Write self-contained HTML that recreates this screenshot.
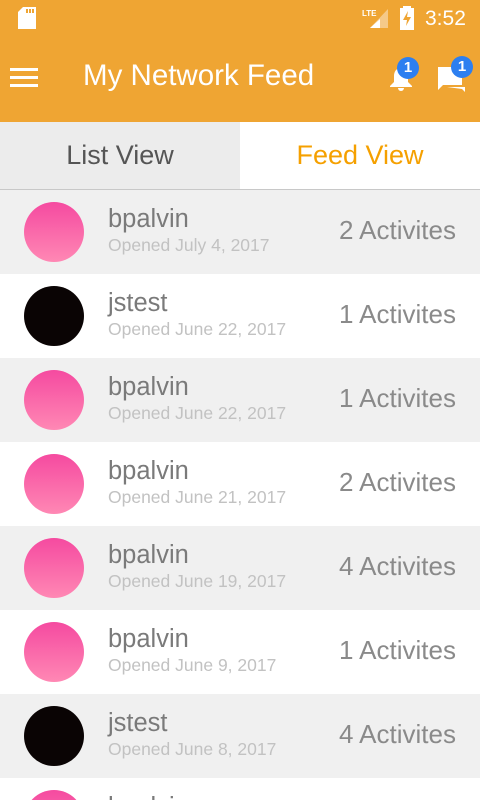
<!DOCTYPE html>
<html style="height:800px;overflow:hidden"><head><style>
*{margin:0;padding:0;box-sizing:border-box}
body{width:480px;height:800px;overflow:hidden;font-family:"Liberation Sans",sans-serif;background:#fff;position:relative}
.top{position:absolute;left:0;top:0;width:480px;height:122px;background:#EFA533}
.title{position:absolute;left:83px;top:59px;font-size:29.5px;color:#fff}
.time{position:absolute;left:425px;top:7px;font-size:21px;color:#fff}
.badge{position:absolute;width:22px;height:22px;border-radius:50%;background:#2D7FF0;color:#fff;font-size:15px;text-align:center;line-height:22px;font-weight:bold}
.tab{position:absolute;top:122px;height:67px;width:240px;text-align:center;line-height:67px;font-size:27px}
.line{position:absolute;top:189px;left:0;width:480px;height:1px;background:#c8c8c8}
.row{position:absolute;left:0;width:480px;height:84px}
.row .av{position:absolute;left:24px;top:12px;width:60px;height:60px;border-radius:50%;background:linear-gradient(#F54AA0,#FF88B4)}
.row .av.b{background:#0a0404}
.row .n{position:absolute;left:108px;top:15px;font-size:25.5px;color:#7a7a7a}
.row .d{position:absolute;left:108px;top:45px;font-size:17.5px;color:#c2c2c2}
.row .a{position:absolute;right:24px;top:25px;font-size:26px;color:#8a8a8a}
</style></head><body>
<div class="top">
<svg style="position:absolute;left:18px;top:7px" width="20" height="22"><path d="M5 0H18V22H0V5Z" fill="#fff"/><rect x="8" y="2" width="2" height="4" fill="#EFA533"/><rect x="11" y="2" width="2" height="4" fill="#EFA533"/><rect x="14" y="2" width="2" height="4" fill="#EFA533"/></svg>
<svg style="position:absolute;left:362px;top:6px" width="30" height="24"><text x="0" y="10" font-size="8" font-weight="bold" fill="#fff" font-family="Liberation Sans">LTE</text><path d="M26 3V22H8Z" fill="#f5c989"/><path d="M18 13V22H8Z" fill="#fff"/></svg>
<svg style="position:absolute;left:400px;top:6px" width="14" height="24"><rect x="3" y="0" width="8" height="3" fill="#fff"/><rect x="0" y="2" width="14" height="22" fill="#fff"/><path d="M8 5L3 14H7L6 20L11 11H7Z" fill="#EFA533"/></svg>
<div class="time">3:52</div>
<svg style="position:absolute;left:10px;top:68px" width="28" height="20"><rect y="0" width="28" height="3" fill="#fff"/><rect y="8" width="28" height="3" fill="#fff"/><rect y="16" width="28" height="3" fill="#fff"/></svg>
<div class="title">My Network Feed</div>
<svg style="position:absolute;left:388px;top:66px" width="26" height="26"><path d="M13 2C8 2 6 6 6 10V16L2 20V21H24V20L20 16V10C20 6 18 2 13 2Z" fill="#fff"/><path d="M10 22H16A3 3 0 0 1 10 22Z" fill="#fff"/></svg>
<div class="badge" style="left:397px;top:57px">1</div>
<svg style="position:absolute;left:437px;top:65px" width="30" height="30"><path d="M1 2H25V20H6L1 25Z" fill="#fff"/><path d="M10 22H28V27L25 24Z" fill="#fff"/></svg>
<div class="badge" style="left:451px;top:56px">1</div>
</div>
<div class="tab" style="left:0;background:#ececec;color:#555">List View</div>
<div class="tab" style="left:240px;background:#fff;color:#F5A000">Feed View</div>
<div class="line"></div>
<div class="row" style="top:190px;background:#f0f0f0"><div class="av"></div><div class="n">bpalvin</div><div class="d">Opened July 4, 2017</div><div class="a">2 Activites</div></div>
<div class="row" style="top:274px;background:#fff"><div class="av b"></div><div class="n">jstest</div><div class="d">Opened June 22, 2017</div><div class="a">1 Activites</div></div>
<div class="row" style="top:358px;background:#f0f0f0"><div class="av"></div><div class="n">bpalvin</div><div class="d">Opened June 22, 2017</div><div class="a">1 Activites</div></div>
<div class="row" style="top:442px;background:#fff"><div class="av"></div><div class="n">bpalvin</div><div class="d">Opened June 21, 2017</div><div class="a">2 Activites</div></div>
<div class="row" style="top:526px;background:#f0f0f0"><div class="av"></div><div class="n">bpalvin</div><div class="d">Opened June 19, 2017</div><div class="a">4 Activites</div></div>
<div class="row" style="top:610px;background:#fff"><div class="av"></div><div class="n">bpalvin</div><div class="d">Opened June 9, 2017</div><div class="a">1 Activites</div></div>
<div class="row" style="top:694px;background:#f0f0f0"><div class="av b"></div><div class="n">jstest</div><div class="d">Opened June 8, 2017</div><div class="a">4 Activites</div></div>
<div class="row" style="top:778px;height:22px;overflow:hidden;background:#fff"><div class="av"></div><div class="n">bpalvin</div></div>
</body></html>
